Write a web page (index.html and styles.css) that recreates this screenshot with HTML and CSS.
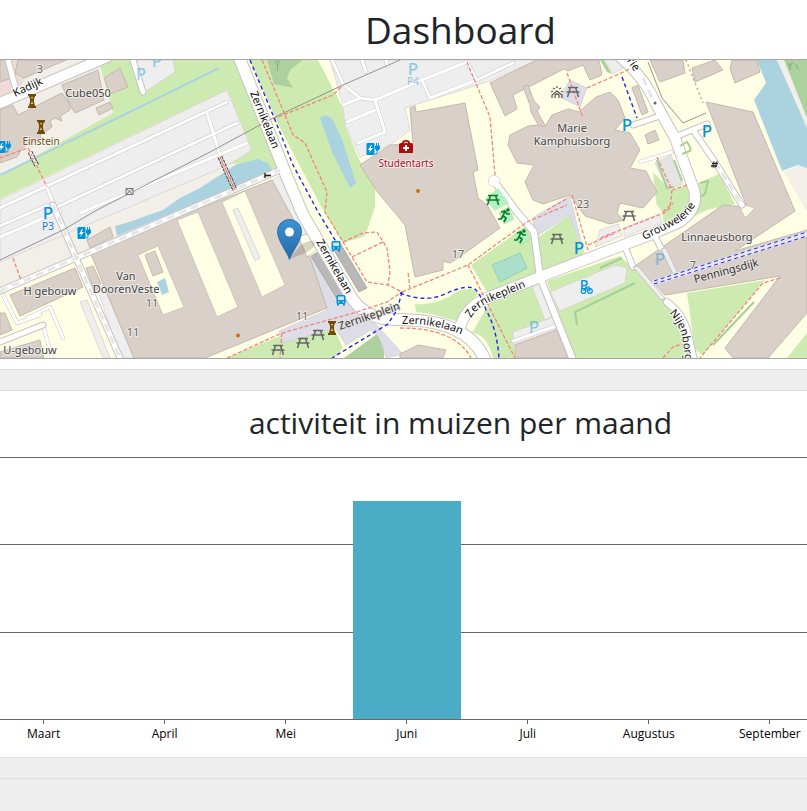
FILE: index.html
```
<!DOCTYPE html>
<html lang="nl">
<head>
<meta charset="utf-8">
<meta name="viewport" content="width=device-width, initial-scale=1">
<title>Dashboard</title>
<link rel="stylesheet" href="styles.css">
</head>
<body>
<header class="page-head"><h1>Dashboard</h1></header>
<main>
<section class="map" aria-label="Kaart">
<svg class="map-canvas" viewBox="0 60 807 298" preserveAspectRatio="xMidYMid slice">
<defs>
<g id="picnic" fill="none" stroke-width="1.5"><path d="M-5-4.500H5M-6.500 0H6.500M-2.500-4.500L-5.500 5M2.500-4.500L5.500 5"/></g>
<g id="bus"><rect x="-4.500" y="-5" width="9" height="9" rx="1.500" fill="#0092da"/><path d="M-3-3.500H3V0H-3Z" fill="#cbe5f1"/><path d="M-3 4V5.500M3 4V5.500" stroke="#0092da" stroke-width="2"/><path d="M-3 2H-1.500M1.500 2H3" stroke="#fff"/></g>
<g id="charge"><rect x="-6.500" y="-6" width="8" height="12" rx="1" fill="#0092da"/><path d="M-2-4L-5 1H-3L-4 4L0-1H-2.500L-1-4Z" fill="#fff"/><path d="M1.500 4C4 7 4 4 4 1" fill="none" stroke="#0092da"/><path d="M2.500-3H6.500V0Q4.500 3 2.500 0ZM3.500-3V-6M5.500-3V-6" fill="#0092da" stroke="#0092da"/></g>
<g id="tower" fill="#734a08"><path d="M-4-7H4V-5H3L2-2V1L3 5H4V7H-4V5H-3L-2 1V-2L-3-5H-4Z"/><path d="M-1-4H1L0-2ZM-1 3L0 0L1 3Z" fill="#e7d8b8"/></g>
<g id="runner"><path d="M-5-2L4-8L10 4L0 9Z" fill="#b5f0c4" stroke="#8edba2" stroke-width=".5"/><circle cx="4" cy="-5" r="1.700" fill="#0a7c24"/><path d="M-3-3L1-4L3-1L6-1M1-4L-1 1L2 3L0 7M-1 1L-3 4H-6" fill="none" stroke="#0a7c24" stroke-width="1.700"/></g>
<linearGradient id="pin" x2="0" y2="1"><stop stop-color="#3a94d4"/><stop offset="1" stop-color="#2468a8"/></linearGradient>
<path id="curve-g" d="M644 240Q665 230 680 222Q698 210 700 187"/>
<path id="curve-n" d="M669 313Q681 326 683 342L687 376"/>
<path id="curve-z" d="M402 324Q435 323 462 335L475 343"/>
<path id="curve-p" d="M471 318Q477 307 492 301L550 277"/>
<path id="curve-w" d="M617 49Q631 65 642 84"/>
</defs>
<rect y="60" width="807" height="298" fill="#ffffe5"/>

<path fill="#f2efe9" d="M0 60H128L140 104L0 176ZM0 270V257L210 171L245 162L272 172L0 294ZM777 60H784L807 118V130ZM784 172L800 165L807 168V212Z"/>
<path fill="#f1dada" d="M0 60H66L24 79L20 88L0 97Z"/>

<g class="grass">
<path d="M100 65L112 60H238L281 168L272 170L262 160L227 165L252 150L227 90L0 199V176L113 113Z"/>
<path d="M250 60H318L343 108L345 125L357 155L375 190V207L365 236L343 243L322 208L280 128Z"/>
<path d="M471 265L527 225L533 232L537 272L488 294Z"/>
<path d="M537 238L570 215L584 256L542 273Z"/>
<path d="M415 304Q438 306 458 291Q474 286 478 293L459 322L432 314L416 312Z"/>
<path d="M490 302L532 285L554 320L513 336L515 358H493Q487 334 472 333Z"/>
<path d="M547 281L620 256L667 302L679 318L690 358H575Z"/>
<path d="M687 293L765 280L703 355L695 350Z"/>
<path d="M227 358L280 336L334 328L343 348L334 358Z"/>
<path d="M653 172L670 190L698 183L719 174L735 204L707 210L665 230L662 212L656 203Z"/>
<path d="M787 358L807 333V358Z"/>
</g>
<g fill="#add19e">
<path d="M267 60H303L290 70L287 78L293 88L274 84ZM784 60H807V118ZM344 358L377 334L384 348V358Z"/>
<path d="M600 60H604L612 74L607 72Z"/>
</g>
<g fill="#eee" stroke="#d8cccc" stroke-width=".7">
<path d="M0 200L227 90L252 150L228 165L0 262Z"/>
<path d="M130 60H173L175 72L143 93Z"/>
<path d="M330 60H537L490 81L405 108L410 130L390 145L360 157L345 125L343 105Z"/>
<path d="M272 180L282 175L309 233L300 237Z"/>
<path d="M80 302L87 300L110 358H103ZM97 287L103 285L134 358H120Z"/>
<path d="M550 292L615 265L627 268L625 283L560 311ZM513 332L553 317L558 329L513 345Z"/>
<path d="M624 237L662 222L660 214L624 228ZM600 230L618 224L622 236L595 247ZM605 60H625L624 68L612 74Z"/>
<path fill="#e4e4e4" d="M655 163L671 155L683 184L668 190Z"/>
<path d="M532 287L540 284L553 316L545 320Z"/>
</g>
<g fill="#dddde8" stroke="#c9c9d8" stroke-width=".6">
<path d="M570 80L587 88L580 107L560 97Z"/><path d="M532 218L570 196L584 253L569 215L537 236Z"/>
<path d="M307 260L320 252L354 310L374 322L403 354L386 358L380 338L371 330L346 345L335 328L283 343L279 331L327 310Z"/>
</g>
<g fill="#aad3df">
<path d="M115 226L126 223L163 210L180 198L200 188L237 164L258 159L268 163L272 170L240 184L200 201L117 236Z"/>
<path d="M320 118Q326 112 333 120L343 142L356 183L350 188L332 152Z"/>
<path d="M757 60H777L807 128V168L798 165L782 171L754 100L766 83Z"/>
</g>
<path d="M0 175L140 107L219 68" fill="none" stroke="#aad3df" stroke-width="2"/>
<path d="M492 265L520 253L527 268L500 282Z" fill="#aae0cb" stroke="#80c6aa" stroke-width=".7"/>

<g class="building">
<path d="M18 60H66L24 78L15 73ZM62 85L98 70L104 100L75 113L70 105ZM104 78L120 68L128 87L110 94ZM96 108L110 102L113 108L99 115ZM0 60H8L12 78L0 82Z"/>
<path d="M0 110L13 105L18 115L62 93L70 105V110L60 116L62 121L55 118L50 121L52 127L40 135L41 139L23 147L17 157L0 163Z"/>
<path d="M90 252L272 180L303 237L327 308L205 358H134Z"/>
<path d="M10 295L75 268L83 287L20 316ZM87 240L110 227L113 237L90 248ZM86 268L93 266L101 283L95 292ZM0 313H5L12 330L0 335ZM0 352L40 340L44 358H0Z"/>
<path d="M410 108L415 106L416 112L465 103L478 170L473 172L478 198L487 205L500 228L458 258L450 263L443 261V270L415 277L405 225L376 190L360 165L390 145L413 144Z"/>
<path d="M490 83L537 60H599L602 75L590 80L583 65L568 71L564 69L513 95L517 109L505 116Z"/>
<path d="M523 87L528 85L534 101L540 107L537 111L545 125L540 128L531 112L530 105Z"/>
<path d="M510 135L528 126L538 125L545 127L552 115L568 109L579 112L596 97L610 92L618 100L625 118L615 130L630 133L640 150L630 168L646 171L657 192L643 208L620 203L617 213L623 220L610 224L585 216L570 195L543 204L533 200L525 182L534 165L517 163L508 145Z"/>
<path d="M650 60H683L685 73L660 82ZM692 68L715 60L723 70L695 82ZM732 60H757L760 72L735 83L730 68ZM632 88L638 85L648 112L642 115ZM645 135L655 130L659 140L648 144Z"/>
<path d="M706 102L753 112L795 211L735 251L807 230V313L768 358H733L725 348L780 276L665 295L653 282L632 268L723 205L747 207Z"/>
<path d="M400 354L418 345L446 350L443 358H400ZM515 345L557 330L568 358H515Z"/>
</g>
<g fill="#ffffe5" stroke="#c5b8ab" stroke-width=".7">
<path d="M177 220L198 212L238 307L217 317ZM222 202L245 191L285 285L262 297ZM138 255L158 246L184 307L163 315ZM738 203L755 208L745 218Z"/>
<path d="M299 237L309 233L318 249L307 257Z"/>
</g>
<path class="building" d="M145 255L155 251L163 272L153 276Z"/>
<path fill="#eee" stroke="#ccc" stroke-width=".7" d="M233 210L238 208L260 258L255 261Z"/>
<path fill="#aad3df" d="M157 282L165 278L169 292L162 295Z"/>
<path fill="#b8b8b8" stroke="#999" stroke-width=".7" d="M311 256L318 252L348 302L337 299ZM332 247L340 243L367 288L359 292Z"/>

<g class="road">
<path class="lane-edge" d="M0 208L227 102M55 208L237 123M80 213L247 143M0 237L60 211M207 113L220 155M0 226L48 205M332 60L343 84L360 98L375 100L422 80L467 62L477 80M422 80L430 98L477 80L513 63M375 100L385 132L358 143M347 122L375 110M343 105L360 98M362 60L366 72M386 60L388 66M513 341L556 326M3 295L17 323L40 315M27 318L50 307L63 338M43 325L52 358M640 162L672 152M47 188L58 215"/>
<path class="lane" d="M0 208L227 102M55 208L237 123M80 213L247 143M0 237L60 211M207 113L220 155M0 226L48 205M332 60L343 84L360 98L375 100L422 80L467 62L477 80M422 80L430 98L477 80L513 63M375 100L385 132L358 143M347 122L375 110M343 105L360 98M362 60L366 72M386 60L388 66M513 341L556 326M3 295L17 323L40 315M27 318L50 307L63 338M43 325L52 358M640 162L672 152M47 188L58 215"/>
</g>
<g class="road" stroke="#c8c2c2">
<path stroke-width="7" d="M0 291L280 170M53 205L77 260L120 358M0 342L43 325M633 125L657 117M675 137L692 130L707 124M693 130L715 162L742 205M625 247L633 267M654 235L661 248M133 60L143 92M8 60L16 90"/>
<path stroke-width="8" d="M494 181L517 212L534 232L540 277L573 360M667 302Q684 315 688 334L694 360"/>
<path stroke-width="12" d="M0 103L107 57M460 327Q467 306 487 298L540 277L610 250L650 235L680 222Q699 208 694 190L675 138L655 102Q645 78 618 55"/>
<path stroke-width="13" d="M239 57L285 172L303 215L350 295Q362 316 387 319L410 320Q470 322 486 362"/>
<circle cx="494" cy="181" r="3" stroke-width="6"/>
</g>
<g class="road" stroke="#fff">
<path stroke-width="5" d="M0 291L280 170M53 205L77 260L120 358M0 342L43 325M633 125L657 117M675 137L692 130L707 124M693 130L715 162L742 205M625 247L633 267M654 235L661 248M133 60L143 92M8 60L16 90"/>
<path stroke-width="6" d="M494 181L517 212L534 232L540 277L573 360M667 302Q684 315 688 334L694 360"/>
<path stroke-width="10" d="M0 103L107 57M460 327Q467 306 487 298L540 277L610 250L650 235L680 222Q699 208 694 190L675 138L655 102Q645 78 618 55"/>
<path stroke-width="11" d="M239 57L285 172L303 215L350 295Q362 316 387 319L410 320Q470 322 486 362"/>
<circle cx="494" cy="181" r="3" stroke-width="5"/>
<path stroke="#e6e6e6" stroke-width="3" stroke-dasharray="8 5" stroke-linecap="butt" d="M0 291L280 170M53 205L77 260L120 358M715 162L742 205M643 78L652 98"/>
</g>
<path d="M633 267L638 266L665 298L661 300ZM661 249L666 248L678 274L674 276Z" fill="#eee" stroke="#bbb" stroke-width=".8"/>

<g fill="none" stroke="#888" stroke-width=".9">
<path d="M0 260L63 230L97 210L210 152L273 118L343 85L400 60M648 62L662 98L683 123L706 113"/>
<path d="M686 60L703 103" stroke="#b5a6a6" stroke-width="1.500" stroke-dasharray="2 3"/>
<path stroke="#a3cf98" stroke-width="2" d="M577 325L575 312L635 283M713 345L754 302M657 160L667 188L674 187M682 181L674 160M680 146L687 142Q692 149 690 151L682 154M700 183L708 181L705 194L700 197M600 268L622 258"/>
</g>
<g class="foot">
<path d="M262 60L283 110L293 135L305 143L327 192L325 212L352 257L367 282L388 285L402 292L468 265L527 222L567 205M273 119L333 95L343 85M343 242L363 233L377 232L387 248L390 272L388 285M352 257L383 242M227 358L282 333L357 312L387 302L402 292M282 333L280 358M468 265L515 358M400 328Q455 328 471 358M410 289L408 272M467 62L490 117L495 175M567 73L583 118M587 88L610 78L632 68M657 157L672 190L687 185M672 190L670 208L664 213L600 238M663 212L673 203M780 278L763 283L700 358M572 195L588 250M588 245L615 233M547 210L568 198M0 158L28 148L47 187M13 258L21 280M663 358L674 346L687 344"/>
</g>
<g class="cycle">
<path d="M250 60L273 115L293 165L317 210L338 245M400 293Q425 303 445 294Q469 283 476 290Q482 297 486 310Q497 329 499 358M402 292L397 310L388 324L332 358M622 77L637 118"/>
<path class="cycle-bed" d="M653 283L807 234"/><path class="thin" d="M654 284L807 236M654 281L807 232"/>
</g>
<g fill="none" stroke-dasharray="3 1"><path d="M220 157L235 190M30 152L37 166" stroke="#444" stroke-width="5"/><path d="M220 157L235 190M30 152L37 166" stroke="#ffe4df" stroke-width="3"/><path d="M220 157L235 190" stroke="#e86b60"/></g>

<path d="M485 199L498 188L509 203L495 211Z" fill="#b5f0c4"/><use href="#picnic" x="493" y="200" stroke="#0a7c24"/>
<g stroke="#666"><use href="#picnic" x="573" y="92"/><use href="#picnic" x="557" y="239"/><use href="#picnic" x="629" y="216"/><use href="#picnic" x="278" y="350"/><use href="#picnic" x="303" y="343"/><use href="#picnic" x="318" y="335"/></g>
<use href="#bus" x="336" y="246"/><use href="#bus" x="341" y="300"/>
<use href="#charge" x="373" y="149"/><use href="#charge" x="84" y="233"/><use href="#charge" x="4" y="147"/>
<use href="#tower" x="32" y="101"/><use href="#tower" x="41" y="127"/><use href="#tower" x="332" y="328"/>
<use href="#runner" x="504" y="215"/><use href="#runner" x="520" y="236"/>
<g><path d="M399 145Q399 143 401 143H402Q402 140 406 140Q410 140 410 143H411Q413 143 413 145V153H399Z" fill="#b00b0b"/><path d="M404 143Q406 141 408 143" stroke="#fff" fill="none"/><path d="M406 145V151M403 148H409" stroke="#fff" stroke-width="2"/></g>
<path d="M552 98V95L557 91L562 95V98M555 98V95Q557 93 559 95V98M551 92L553 91M553 88L555 89M557 86V88M561 88L559 89M563 92L561 91" fill="none" stroke="#555" stroke-width="1.200"/>
<path d="M126 188.500H133V194.500H126ZM126 188.500L133 194.500M133 188.500L126 194.500" fill="#eee" stroke="#666" stroke-width=".9"/>
<path d="M265 173V178M265 175.500H271M712 163.500H718M711 166H717" fill="none" stroke="#222" stroke-width="1.400"/><path d="M714 161L713 168M717 161L715 168" stroke="#222" stroke-width=".7"/>
<circle cx="418" cy="191" r="2" fill="#c77400"/><circle cx="238" cy="335.500" r="2" fill="#c77400"/><circle cx="655" cy="103" r="1.500" fill="#666"/>
<g fill="none" stroke="#0092da" stroke-width="1.200"><circle cx="583.500" cy="291" r="2.300"/><circle cx="590" cy="291" r="2.300"/><path d="M583.500 291L586 287H589L590 291M586 287L588 291"/></g>
<path d="M277.500 65Q274 61 277.500 60Q281 61 277.500 65V71M790 63V70M787 63L790 66L793 62M796 64L798 69" stroke="#7fb172" fill="none"/>

<g class="parking"><text x="48" y="219">P</text><text x="579" y="254">P</text><text x="627" y="131">P</text><text x="707" y="137">P</text><text x="584" y="290" class="p-small">P</text></g>
<g class="parking faint"><text x="141" y="80">P</text><text x="157" y="67">P</text><text x="413" y="75">P</text><text x="534" y="333">P</text><text x="660" y="265">P</text></g>
<text class="blue" x="48" y="230">P3</text><text class="blue faint" x="413" y="85">P4</text>
<g class="label">
<text x="88" y="97">Cube050</text><text x="572" y="132">Marie</text><text x="572" y="145">Kamphuisborg</text><text x="717" y="241">Linnaeusborg</text><text x="50" y="295">H gebouw</text><text x="126" y="280">Van</text><text x="126" y="293">DoorenVeste</text><text x="30" y="354">U-gebouw</text>
<text class="brown" x="41" y="145">Einstein</text><text class="red" x="406" y="167">Studentarts</text>
</g>
<g class="number"><text x="40" y="73">3</text><text x="152" y="307">11</text><text x="133" y="336">11</text><text x="302" y="320">11</text><text x="458" y="258">17</text><text x="583" y="208">23</text><text x="693" y="269">7</text></g>
<g class="street">
<text transform="translate(15 97) rotate(-25)">Kadijk</text>
<text transform="translate(250 93) rotate(68)">Zernikelaan</text>
<text transform="translate(316 242) rotate(60)">Zernikelaan</text>
<text transform="translate(340 330) rotate(-19)" class="soft">Zernikeplein</text>
<text transform="translate(695 283) rotate(-15)" class="soft">Penningsdijk</text>
<text><textPath href="#curve-z">Zernikelaan</textPath></text><text><textPath href="#curve-p">Zernikeplein</textPath></text>
<text><textPath href="#curve-g">Grouwelerie</textPath></text><text><textPath href="#curve-n">Nijenborgh</textPath></text><text><textPath href="#curve-w">elerie</textPath></text>
</g>
<path d="M289 259L301 245Q312 238 315 243Q315 251 289 259Z" fill="#444" opacity=".22"/>
<path d="M289.500 259.500C288 253 277.500 241 277.500 231.500A12 12 0 0 1 301.500 231.500C301.500 241 291 253 289.500 259.500Z" fill="url(#pin)" stroke="#2c6ea8"/><circle cx="289.500" cy="232" r="4.500" fill="#fff"/>
</svg>
</section>
<section class="chart-card">
<h2>activiteit in muizen per maand</h2>
<div class="chart">
<div class="plot"><div class="bar"></div></div>
<div class="axis"><span>Maart</span><span>April</span><span>Mei</span><span>Juni</span><span>Juli</span><span>Augustus</span><span>September</span></div>
</div>
</section>
</main>
<footer class="page-foot"></footer>
</body>
</html>
```
FILE: styles.css
```
* { box-sizing: border-box; }
body { margin: 0; background: #eee; color: #212529; font-family: "Open Sans", "Noto Sans", sans-serif; overflow-x: hidden; }
h1, h2 { margin: 0; padding-left: 114px; font-weight: 400; text-align: center; white-space: nowrap; }
.page-head { background: #fff; height: 59px; }
h1 { font-size: 37px; line-height: 60px; }
h2 { font-size: 30px; line-height: 64px; height: 66px; }
main { display: grid; gap: 20px; }
.map { background: #fff; border-top: 1px solid #a5a5a5; border-bottom: 1px solid #ddd; padding-bottom: 10px; }
.map-canvas { display: block; width: 100%; height: 299px; border-bottom: 1px solid #a5a5a5; font-family: "Noto Sans", sans-serif; }
.grass { fill: #cdebb0; }
.building { fill: #d9d0c9; stroke: #c5b8ab; stroke-width: 1; }
.road { fill: none; stroke-linecap: round; stroke-linejoin: round; }
.lane-edge { stroke: #c6c6c6; stroke-width: 4; }
.lane { stroke: #fff; stroke-width: 3; }
.foot { fill: none; stroke: #f4847a; stroke-width: 1.3; stroke-dasharray: 4 2; }
.cycle { fill: none; stroke: #2525e8; stroke-width: 1.4; stroke-dasharray: 4 3; }
.cycle .cycle-bed { stroke: #e8e8f4; stroke-width: 5; stroke-dasharray: none; }
.cycle .thin { stroke-width: 1; }
.map-canvas text { paint-order: stroke; stroke-linejoin: round; }
.label, .number, .parking, .blue { text-anchor: middle; }
.label { font-size: 11px; fill: #444; stroke: rgba(255, 255, 255, .6); stroke-width: 2px; }
.number { font-size: 11px; fill: #666; stroke: rgba(255, 255, 255, .6); stroke-width: 2px; }
.label .brown { fill: #734a08; font-size: 10px; }
.label .red { fill: #b00b2c; font-size: 10px; }
.street { font-size: 11px; fill: #111; stroke: #fff; stroke-width: 2px; }
.street .soft { fill: #333; stroke: #e5e0dd; }
.parking { font-size: 17px; font-weight: 500; fill: #0092da; }
.parking .p-small { font-size: 14px; }
.blue { font-size: 10px; fill: #1678cc; }
.faint { opacity: .4; }
.chart-card { background: #fff; border-top: 1px solid #ddd; border-bottom: 1px solid #ddd; height: 368px; }
.chart { overflow: hidden; height: 300px; }
.plot, .axis { display: grid; grid-template-columns: repeat(7, 1fr); width: 105%; margin-left: -2.1%; }
.plot { height: 263px; align-items: end; border-bottom: 1px solid #666; background: linear-gradient(#666, #666) 0 0 / 100% 1px no-repeat, linear-gradient(#666, #666) 0 87px / 100% 1px no-repeat, linear-gradient(#666, #666) 0 175px / 100% 1px no-repeat; }
.bar { grid-column: 4; justify-self: center; width: 89%; height: 218px; background: #4bacc6; }
.axis { color: #000; font-size: 12px; line-height: 20px; text-align: center; }
.axis span::before { content: ""; display: block; width: 1px; height: 4px; margin: 0 auto; background: #666; }
.page-foot { margin-top: 20px; border-top: 1px solid #ddd; height: 33px; }
```
